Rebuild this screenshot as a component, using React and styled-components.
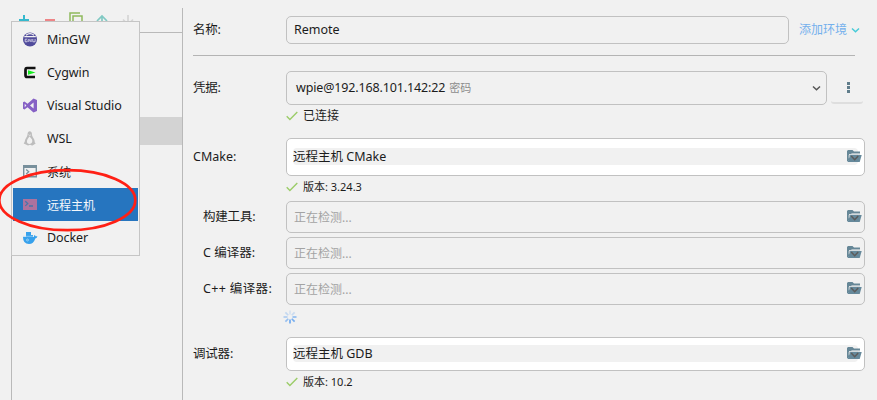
import React from 'react';
import styled, { createGlobalStyle } from 'styled-components';

const Global = createGlobalStyle`
  * { box-sizing: border-box; }
  body { margin: 0; background: #f1f1f1; overflow: hidden; }
`;

const Window = styled.div`
  position: relative;
  display: flex;
  width: 877px;
  height: 400px;
  overflow: hidden;
  background: #f1f1f1;
  color: #1c1c1c;
  font: 12.5px/18px 'Noto Sans', 'Noto Sans CJK SC', sans-serif;
  white-space: nowrap;
`;

const Sidebar = styled.aside`
  width: 172px;
  height: 392px;
  margin: 8px 0 0 11px;
  border-right: 1px solid #b9b9b9;
`;

const Toolbar = styled.div`
  display: flex;
  gap: 10px;
  height: 24px;
  padding: 4px 0 0 5px;
`;

const ToolIcon = styled.svg`
  flex: none;
  width: 16px;
  height: 16px;
  fill: none;
  stroke: ${(p) => p.$color};
  stroke-width: ${(p) => p.$weight || 2};
`;

const EnvironmentList = styled.div`
  height: 368px;
  padding-top: 84px;
  border-top: 1px solid #b9b9b9;
  border-left: 1px solid #b9b9b9;
`;

const ListSelection = styled.div`
  height: 28px;
  background: #d3d3d3;
`;

const Menu = styled.ul`
  position: absolute;
  top: 21px;
  left: 11px;
  width: 129px;
  height: 235px;
  margin: 0;
  padding: 1px;
  border: 1px solid #c5c5c5;
  background: #f1f1f1;
  list-style: none;
`;

const MenuItem = styled.li`
  display: flex;
  align-items: center;
  gap: 9px;
  height: 33px;
  width: 125px;
  padding-left: 10px;
  background: ${(p) => (p.$selected ? '#2675bf' : 'transparent')};
  color: ${(p) => (p.$selected ? '#f4f8fc' : '#1c1c1c')};
`;

const MenuText = styled.span`
  padding-top: ${(p) => (p.$cjk ? 2 : 0)}px;
  font-size: ${(p) => (p.$cjk ? 12 : 12.5)}px;
  letter-spacing: ${(p) => (p.$cjk ? 0 : -0.06)}px;
`;

const MenuIcon = styled.svg`
  flex: none;
  width: 15px;
  height: 15px;
`;

const Annotation = styled.svg`
  position: absolute;
  top: 166px;
  left: 0;
  width: 140px;
  height: 68px;
  fill: none;
  stroke: #ff2015;
  stroke-width: 2.7;
`;

const Form = styled.main`
  display: flex;
  flex-direction: column;
  width: 694px;
  padding: 16px 0 0 10px;
`;

const Row = styled.div`
  display: flex;
  align-items: center;
  height: ${(p) => p.$height}px;
  margin-bottom: ${(p) => p.$after || 0}px;
`;

const Label = styled.label`
  flex: none;
  width: 93px;
  padding-left: ${(p) => (p.$nested ? 10 : 0)}px;
  letter-spacing: ${(p) => p.$spacing || 0}px;
`;

const Field = styled.div`
  display: flex;
  align-items: center;
  width: ${(p) => p.$width}px;
  height: 100%;
  padding: 0 ${(p) => (p.$trail === undefined ? 2 : p.$trail)}px 0 ${(p) => p.$lead || 7}px;
  border: 1px solid #c1c1c1;
  border-radius: 5px;
  background: ${(p) => (p.$white ? '#fff' : '#f1f1f1')};
  color: ${(p) => (p.$muted ? '#a3a3a3' : '#1c1c1c')};
`;

const FieldText = styled.span`
  flex: 1;
  letter-spacing: ${(p) => p.$spacing || 0}px;
`;

const Placeholder = styled.span`
  flex: 1;
  padding-top: 1px;
  font-size: 12px;
`;

const Value = styled.div`
  flex: 1;
  height: 17px;
  margin: 0 -11px 1px 0;
  border-radius: 4px;
  background: #f1f1f1;
  line-height: 17px;
`;

const Secondary = styled.span`
  margin-left: 4px;
  color: #8c8c8c;
  font-size: 11px;
  letter-spacing: 0;
`;

const EnvLink = styled.a`
  display: flex;
  align-items: center;
  gap: 4px;
  margin-left: 10px;
  color: #74b0ed;
  font-size: 12px;
`;

const Divider = styled.div`
  width: 662px;
  height: 1px;
  margin-bottom: 15px;
  background: #b4b4b4;
`;

const MoreButton = styled.button`
  display: flex;
  align-items: center;
  justify-content: center;
  width: 32px;
  height: 32px;
  margin-left: 4px;
  padding: 0 0 0 3px;
  border: 0;
  border-bottom: 2px solid #dedede;
  border-radius: 3px;
  background: transparent;
`;

const Status = styled.div`
  display: flex;
  align-items: center;
  gap: 5px;
  height: ${(p) => p.$height}px;
  margin: 0 0 ${(p) => p.$after || 0}px 93px;
  font-size: ${(p) => p.$size || 11}px;
`;

const Progress = styled.div`
  display: flex;
  height: 28px;
  margin-bottom: 1px;
  padding: 2px 0 0 90px;
`;

const Glyph = styled.svg`
  flex: none;
  display: block;
`;

const FolderGlyph = styled(Glyph)`
  margin-bottom: 2px;
`;

function Folder() {
  return (
    <FolderGlyph width="15" height="12" viewBox="0 0 15 12">
      <path d="M0 1 1 0h4.5L7 1.5h6V4H2v6L.5 11.5 0 11Z" fill="#668797" />
      <path d="M5 3h8v1.5H3.5L1.5 9V5L3 4.5Z" fill="#b3c1c8" />
      <path d="M3.2 5H14.7L12.7 12H.7Z" fill="#66899b" />
      <path d="m4.2 6 3.5 3.7L11.2 6" fill="none" stroke="#5c5c5c" strokeWidth="1.5" />
    </FolderGlyph>
  );
}

function Chevron({ color }) {
  return (
    <Glyph width="9" height="7" viewBox="0 0 9 7">
      <path d="m1 1.5 3.5 3.3L8 1.5" fill="none" stroke={color} strokeWidth="1.5" />
    </Glyph>
  );
}

function Check() {
  return (
    <Glyph width="12" height="10" viewBox="0 0 12 10">
      <path d="m.7 5.3 3.2 3.2L11.3 1" fill="none" stroke="#9bcc68" strokeWidth="1.4" />
    </Glyph>
  );
}

const icons = {
  mingw: (
    <MenuIcon viewBox="0 0 15 15">
      <circle cx="7" cy="7.5" r="7" fill="#504b9b" />
      <path d="M3 3.2Q7-.1 11 3.2M1.3 4.7h11.5" fill="none" stroke="#f1f1f1" strokeWidth="1.3" />
      <path d="M4.3 7.2H2.2v2.6h2V8.4M5.8 10V7.2l2.3 2.6V7M9.8 7v2.8h2.3V7" fill="none" stroke="#e7e5f2" strokeWidth=".8" />
    </MenuIcon>
  ),
  cygwin: (
    <MenuIcon viewBox="0 0 15 15">
      <path d="M12.5 3H4Q2.5 3 2.5 5v5q0 2 1.5 2h8" fill="none" stroke="#111" strokeWidth="2.7" />
      <path d="M5 5.2 12.5 7.5 5 9.8Z" fill="#16ed20" />
    </MenuIcon>
  ),
  studio: (
    <MenuIcon viewBox="0 0 15 15">
      <path d="M10.5.5 14 2v11l-3.5 1.5-6-5.3-3 2.3L0 10.7V4.3l1.5-.8 3 2.3ZM10.6 4.6 7 7.5l3.6 2.9ZM1.7 5.7v3.6l1.7-1.8Z" fill="#8661c5" fillRule="evenodd" />
    </MenuIcon>
  ),
  wsl: (
    <MenuIcon viewBox="0 0 15 15">
      <path d="M4.5 3.5C4.5-.8 9-.8 9 3.5c0 3 3 4 2.7 7.8l1 1.2-3.2 2H9L7 13.8l-2 .7-4.3-2 1-1.7C2 7.5 4.5 6 4.5 3.5Z" fill="#bdbdbd" />
      <path d="M6.5 5.5c-2.7 3-3.5 6.2-1.3 7.3 3 .8 5-1.5 3.7-4.5Z" fill="#f1f1f1" />
      <path d="m5.5 3.7 1.3.9 1.3-.9" stroke="#eee" strokeWidth=".8" fill="none" />
    </MenuIcon>
  ),
  system: (
    <MenuIcon viewBox="0 0 15 15">
      <path d="M.7 2h12.6v10.8H.7Z" fill="none" stroke="#78909c" strokeWidth="1.4" />
      <path d="M0 1h14v3H0Z" fill="#78909c" />
      <path d="m3.2 5.5 2.5 2.3-2.5 2.3M7 10.5h4" fill="none" stroke="#78909c" strokeWidth="1.3" />
    </MenuIcon>
  ),
  remote: (
    <MenuIcon viewBox="0 0 15 15">
      <path d="M0 2h14v11H0Z" fill="#ac729e" />
      <path d="m2.3 4.3 2.4 2.3-2.4 2.3M6 9h4" fill="none" stroke="#4675ab" strokeWidth="1.3" />
    </MenuIcon>
  ),
  docker: (
    <MenuIcon viewBox="0 0 15 15">
      <path d="M3 2h5v3h2v2h.8q.2-1.8 1.1-2l.6 1.2 1.9.1q-.2 2-2.1 2.1Q10.5 14 6 14 0 14 0 7h3Z" fill="#37a1ec" />
      <path d="M0 6.3h10" stroke="#a8d4f3" strokeWidth=".7" />
      <circle cx="4.5" cy="10" r="1" fill="none" stroke="#b6def8" strokeWidth=".7" />
    </MenuIcon>
  ),
};

const environments = [
  ['mingw', 'MinGW'],
  ['cygwin', 'Cygwin'],
  ['studio', 'Visual Studio'],
  ['wsl', 'WSL'],
  ['system', '系统', true],
  ['remote', '远程主机', true],
  ['docker', 'Docker'],
];

const tools = [
  ['构建工具:', 4, -0.2],
  ['C 编译器:', 4, 0],
  ['C++ 编译器:', 3, 0.35],
];

const spokes = [1, 0.95, 0.75, 0.3, 0.2, 0.35, 0.5, 0.7];

export default function App() {
  return (
    <>
      <Global />
      <Window>
        <Sidebar>
          <Toolbar>
            <ToolIcon $color="#35b9cd" viewBox="0 0 16 16"><path d="M8 3v10M3 8h10" /></ToolIcon>
            <ToolIcon $color="#ee8587" $weight={3} viewBox="0 0 16 16"><path d="M3 8.5h10" /></ToolIcon>
            <ToolIcon $color="#8fb95c" $weight={1.5} viewBox="0 0 16 16"><path d="M12 1H2v11M5 4h9v10H5Z" /></ToolIcon>
            <ToolIcon $color="#81c9c3" $weight={1.7} viewBox="0 0 16 16"><path d="M8 14V4M3 9l5-5 5 5" /></ToolIcon>
            <ToolIcon $color="#d5d5d5" $weight={1.7} viewBox="0 0 16 16"><path d="M8 3v10M3 7.5l5 5 5-5" /></ToolIcon>
          </Toolbar>
          <EnvironmentList><ListSelection /></EnvironmentList>
        </Sidebar>

        <Form>
          <Row $height={28} $after={11}>
            <Label $spacing={-0.2}>名称:</Label>
            <Field $width={503}>Remote</Field>
            <EnvLink>添加环境<Chevron color="#48cbd8" /></EnvLink>
          </Row>
          <Divider />
          <Row $height={34}>
            <Label $spacing={-0.2}>凭据:</Label>
            <Field $width={541} $lead={9} $trail={5}>
              <FieldText $spacing={-0.14}>wpie@192.168.101.142:22<Secondary>密码</Secondary></FieldText>
              <Chevron color="#555" />
            </Field>
            <MoreButton aria-label="更多">
              <Glyph width="3" height="11" viewBox="0 0 3 11"><path d="M0 0h3v3H0ZM0 4h3v3H0ZM0 8h3v3H0Z" fill="#607d8b" /></Glyph>
            </MoreButton>
          </Row>
          <Status $height={22} $after={11} $size={12}><Check />已连接</Status>
          <Row $height={38}>
            <Label>CMake:</Label>
            <Field $width={579} $lead={6} $white><Value>远程主机 CMake</Value><Folder /></Field>
          </Row>
          <Status $height={21} $after={4}><Check />版本: 3.24.3</Status>
          {tools.map(([name, after, spacing]) => (
            <Row key={name} $height={32} $after={after}>
              <Label $nested $spacing={spacing}>{name}</Label>
              <Field $width={579} $muted><Placeholder>正在检测...</Placeholder><Folder /></Field>
            </Row>
          ))}
          <Progress>
            <Glyph width="14" height="14" viewBox="0 0 14 14">
              {spokes.map((opacity, i) => (
                <path key={i} d="M7 9.5v4" stroke="#70abf0" strokeWidth="1.7" opacity={opacity} transform={`rotate(${-i * 45} 7 7)`} />
              ))}
            </Glyph>
          </Progress>
          <Row $height={34}>
            <Label $spacing={-0.2}>调试器:</Label>
            <Field $width={579} $lead={6} $white><Value>远程主机 GDB</Value><Folder /></Field>
          </Row>
          <Status $height={22}><Check />版本: 10.2</Status>
        </Form>

        <Menu>
          {environments.map(([id, name, cjk]) => (
            <MenuItem key={id} $selected={id === 'remote'}>
              {icons[id]}<MenuText $cjk={cjk}>{name}</MenuText>
            </MenuItem>
          ))}
        </Menu>
        <Annotation viewBox="0 0 140 68"><ellipse cx="67.3" cy="34.2" rx="68" ry="30" /></Annotation>
      </Window>
    </>
  );
}
